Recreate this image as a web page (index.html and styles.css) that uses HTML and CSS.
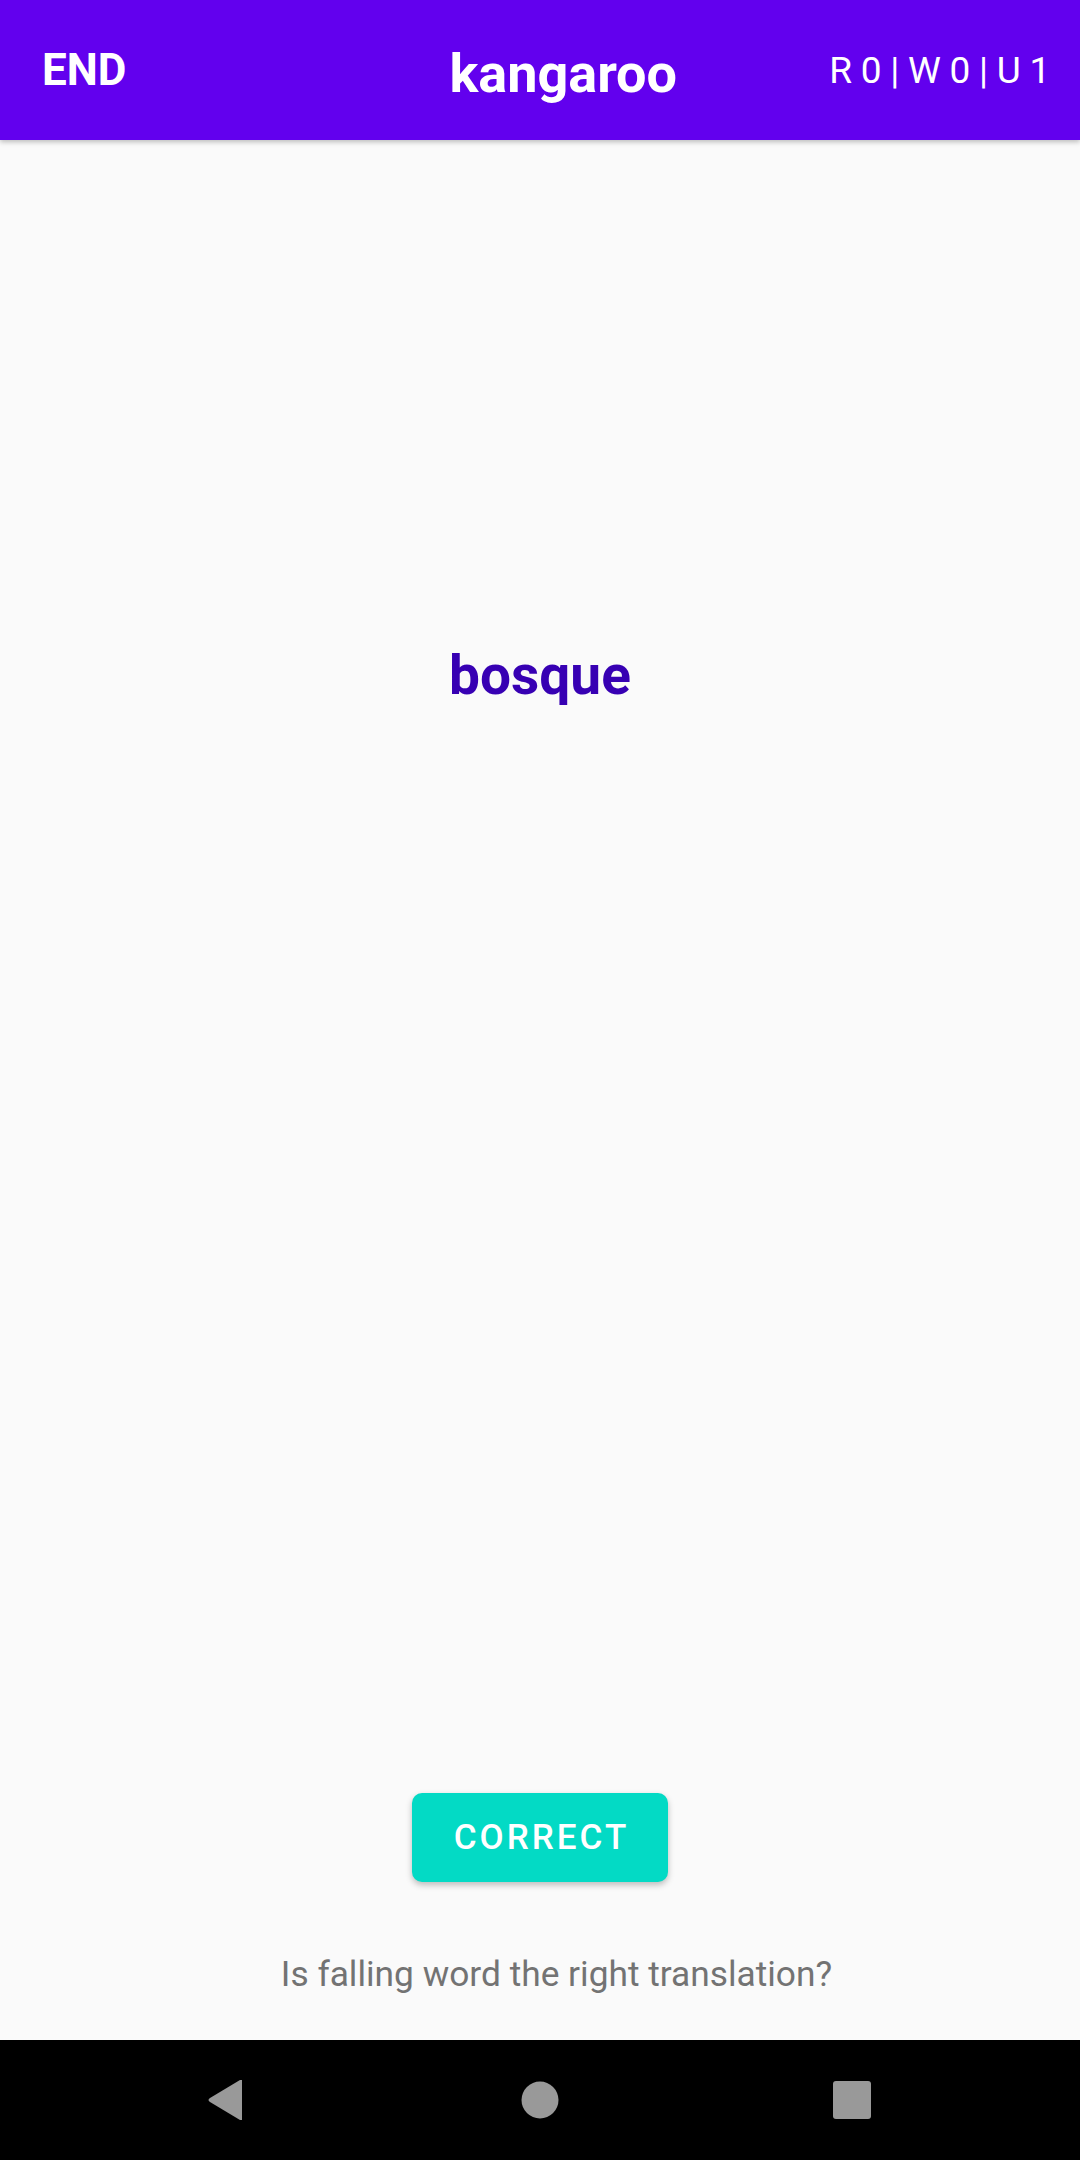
FILE: index.html
```html
<!DOCTYPE html>
<html>
<head>
<meta charset="utf-8">
<link rel="stylesheet" href="styles.css">
</head>
<body>
<div class="screen">
  <header class="appbar">
    <span class="end">END</span>
    <span class="title">kangaroo</span>
    <span class="stats">R0|W0|U1</span>
  </header>
  <main class="stage">
    <div class="field">
      <span class="word">bosque</span>
    </div>
    <button class="correct">CORRECT</button>
    <p class="hint">Is falling word the right translation?</p>
  </main>
  <nav class="navbar">
    <svg class="nav-icon" width="40" height="40" viewBox="0 0 40 40"><path d="M35 0 L35 40 L33 40 L3 22 Q0 20 3 18 L33 0 Z" fill="#999"/></svg>
    <svg class="nav-icon" width="40" height="40" viewBox="0 0 40 40"><circle cx="20" cy="20" r="18.5" fill="#999"/></svg>
    <svg class="nav-icon" width="40" height="40" viewBox="0 0 40 40"><rect x="1" y="1" width="38" height="38" rx="3" fill="#999"/></svg>
  </nav>
</div>
</body>
</html>
```
FILE: styles.css
```css
html, body {
  margin: 0;
  padding: 0;
}
body {
  background: #fafafa;
  font-family: Roboto, "Liberation Sans", sans-serif;
}
.screen {
  width: 1080px;
  height: 2160px;
  display: flex;
  flex-direction: column;
}
.appbar {
  height: 140px;
  flex: none;
  background: #6200ee;
  color: #fff;
  display: flex;
  align-items: center;
  padding: 0 21px 0 42px;
  box-shadow: 0 2px 5px rgba(0,0,0,0.25);
  position: relative;
  z-index: 1;
}
.end {
  font-weight: 700;
  font-size: 44px;
}
.title {
  font-weight: 700;
  font-size: 54px;
  margin-left: 323px;
  position: relative;
  top: 3px;
}
.stats {
  margin-left: auto;
  font-size: 37px;
  letter-spacing: 8.7px;
  font-weight: 400;
}
.stage {
  flex: 1;
  display: flex;
  flex-direction: column;
  align-items: center;
}
.field {
  flex: 1;
  align-self: stretch;
  display: flex;
  justify-content: center;
  padding-top: 508px;
}
.word {
  font-weight: 700;
  font-size: 55px;
  color: #3700b3;
  line-height: 1;
  height: 60px;
}
.correct {
  width: 256px;
  height: 89px;
  background: #03dac5;
  border: none;
  border-radius: 10px;
  color: #fff;
  font-family: Roboto, "Liberation Sans", sans-serif;
  font-weight: 500;
  font-size: 35px;
  letter-spacing: 3px;
  box-shadow: 0 3px 6px rgba(0,0,0,0.25);
  padding: 0 0 0 3px;
}
.hint {
  margin: 75px 0 48px 33px;
  font-size: 35.3px;
  color: #737373;
  line-height: 1;
}
.navbar {
  height: 120px;
  flex: none;
  background: #000;
  display: flex;
  align-items: center;
  justify-content: space-between;
  padding: 0 208px 0 207px;
}
.nav-icon {
  display: block;
}
```
